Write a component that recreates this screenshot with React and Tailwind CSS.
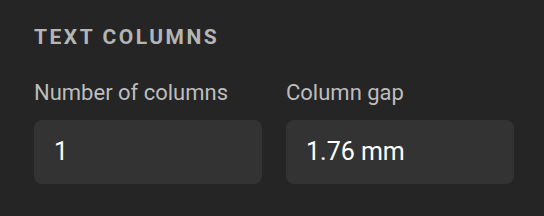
import React from 'react';

const Field = ({ label, value }) => (
  <div className="flex flex-col">
    <label className="text-[22px] leading-[28px] text-[#bdbdbd]">{label}</label>
    <div className="mt-[13px] h-[64px] rounded-[8px] bg-[#333333] px-[20px] flex items-center text-[25px] text-white">
      {value}
    </div>
  </div>
);

const App = () => {
  return (
    <div
      className="w-[544px] h-[216px] bg-[#252525] pl-[34px] pr-[30px] pt-[25px]"
      style={{ fontFamily: 'Roboto, "Noto Sans", sans-serif' }}
    >
      <h2 className="text-[21px] leading-[24px] font-bold tracking-[0.12em] text-[#b5b5b5]">TEXT COLUMNS</h2>
      <div className="mt-[30px] grid grid-cols-2 gap-[24px]">
        <Field label="Number of columns" value="1" />
        <Field label="Column gap" value="1.76 mm" />
      </div>
    </div>
  );
};

export default App;
